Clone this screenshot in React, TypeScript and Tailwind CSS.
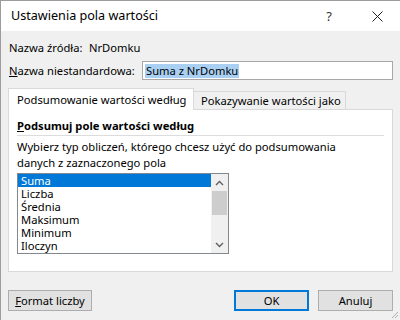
import React from "react";

const items = ["Suma", "Liczba", "Średnia", "Maksimum", "Minimum", "Iloczyn"];

function Chevron({ up }: { up?: boolean }) {
  return (
    <svg width="9" height="6" viewBox="0 0 9 6" className="block">
      <path
        d={up ? "M1 5 L4.5 1.5 L8 5" : "M1 1 L4.5 4.5 L8 1"}
        fill="none"
        stroke="#606060"
        strokeWidth="1.4"
      />
    </svg>
  );
}

export default function App() {
  return (
    <div className="relative h-[320px] w-[400px] overflow-hidden whitespace-nowrap border-l border-t border-[#9c9c9c] bg-[#f0f0f0] font-['Noto_Sans',sans-serif] text-[11.2px] leading-[16px] text-black">
      {/* title bar */}
      <div className="flex h-[30px] items-center bg-white pl-[10px]">
        <span className="text-[12.6px]">Ustawienia pola wartości</span>
        <span className="ml-auto mr-[40px] text-[13px] text-[#333]">?</span>
        <svg width="11" height="11" viewBox="0 0 11 11" className="mr-[17px]">
          <path d="M0.5 0.5 L10.5 10.5 M10.5 0.5 L0.5 10.5" stroke="#222" strokeWidth="1" />
        </svg>
      </div>

      <div className="px-[7px] pt-[9px]">
        <div className="flex h-[16px] items-center pl-[1px]">
          <span className="w-[80px]">Nazwa źródła:</span>
          <span>NrDomku</span>
        </div>

        <div className="mt-[5px] flex items-center pl-[1px]">
          <span>
            <u>N</u>azwa niestandardowa:
          </span>
          <div className="ml-auto flex h-[19px] w-[251px] items-center border border-[#a8a8a8] bg-white pl-[2px]">
            <span className="bg-[#a9d0f3] px-[1px] leading-[14px]">Suma z NrDomku</span>
          </div>
        </div>

        {/* tabs */}
        <div className="mt-[8px] flex items-end">
          <div className="relative z-10 -mb-px h-[22px] w-[186px] border border-b-0 border-[#d9d9d9] bg-white pl-[8px] pt-[3px]">
            Podsumowanie wartości według
          </div>
          <div className="h-[18px] w-[152px] border border-b-0 border-l-0 border-[#d9d9d9] bg-[#f0f0f0] pl-[7px] pt-px">
            Pokazywanie wartości jako
          </div>
        </div>

        <div className="h-[163px] border border-[#d9d9d9] bg-white px-[8px] pt-[9px]">
          <div className="font-bold leading-[14px]">
            <u>P</u>odsumuj pole wartości według
          </div>
          <div className="mt-[2px] h-px bg-[#dcdcdc]" />
          <div className="mt-[3px]">
            Wybierz typ obliczeń, którego chcesz użyć do podsumowania
            <br />
            danych z zaznaczonego pola
          </div>

          <div className="mt-[2px] flex h-[81px] w-[212px] border border-[#828790] bg-white">
            <div className="flex-1 overflow-hidden">
              {items.map((it, i) => (
                <div
                  key={it}
                  className={
                    i === 0
                      ? "h-[13px] bg-[#0078d7] pl-[3px] leading-[13px] text-white"
                      : "h-[13px] pl-[3px] leading-[13px]"
                  }
                >
                  {it}
                </div>
              ))}
            </div>
            <div className="flex w-[17px] flex-col bg-[#f0f0f0]">
              <div className="flex h-[17px] items-center justify-center">
                <Chevron up />
              </div>
              <div className="mx-[1px] h-[24px] bg-[#cdcdcd]" />
              <div className="flex-1" />
              <div className="flex h-[17px] items-center justify-center">
                <Chevron />
              </div>
            </div>
          </div>
        </div>

        {/* buttons */}
        <div className="mt-[18px] flex">
          <button className="h-[21px] w-[84px] border border-[#adadad] bg-[#e1e1e1]">
            <u>F</u>ormat liczby
          </button>
          <button className="ml-auto h-[21px] w-[75px] border border-[#0078d7] bg-[#e1e1e1] shadow-[inset_0_0_0_1px_#0078d7]">
            OK
          </button>
          <button className="ml-[9px] h-[21px] w-[75px] border border-[#adadad] bg-[#e1e1e1]">
            Anuluj
          </button>
        </div>
      </div>

      {/* resize grip */}
      <svg width="8" height="8" viewBox="0 0 8 8" className="absolute bottom-[1px] right-[1px]">
        <path d="M7 1 L1 7 M7 4 L4 7" stroke="#b0b0b0" strokeWidth="1" />
      </svg>
    </div>
  );
}
